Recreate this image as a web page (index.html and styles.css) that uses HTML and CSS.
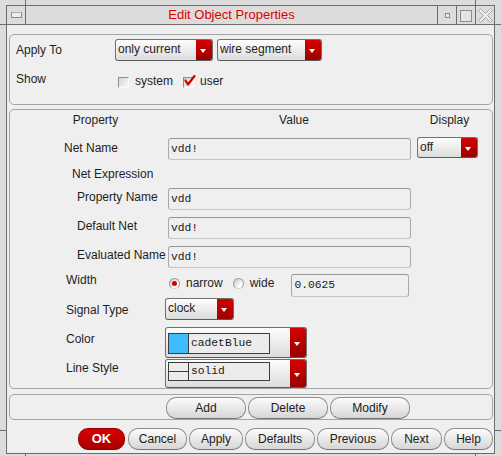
FILE: index.html
```html
<!DOCTYPE html>
<html>
<head>
<meta charset="utf-8">
<title>Edit Object Properties</title>
<link rel="stylesheet" href="styles.css">
</head>
<body>
<div class="screen">
  <div class="mark m-tl"></div>
  <div class="mark m-tr"></div>
  <div class="mark m-lh1"></div>
  <div class="mark m-rh1"></div>
  <div class="mark m-lh2"></div>
  <div class="mark m-rh2"></div>
  <div class="mark m-bl"></div>
  <div class="mark m-br"></div>

  <div class="frame">
    <div class="titlebar">
      <div class="tb-cell"><span class="ico-menu"></span></div>
      <div class="tb-title">Edit Object Properties</div>
      <div class="tb-cell"><span class="ico-min"></span></div>
      <div class="tb-cell sep"><span class="ico-max"></span></div>
      <div class="tb-cell sep">
        <svg class="ico-close" width="15" height="15" viewBox="-0.5 -0.5 15 15">
          <polygon points="0,2 2,0 7,5 12,0 14,2 9,7 14,12 12,14 7,9 2,14 0,12 5,7" fill="#ececec" stroke="#a4a4a4" stroke-width="1"/>
        </svg>
      </div>
    </div>

    <div class="dialog">
      <div class="group g1">
        <div class="g1-row r-apply">
          <div class="g1-lbl">Apply To</div>
          <div class="combo c-only"><span class="combo-text">only current</span><span class="combo-btn"></span></div>
          <div class="combo c-wire"><span class="combo-text">wire segment</span><span class="combo-btn"></span></div>
        </div>
        <div class="g1-row r-show">
          <div class="g1-lbl">Show</div>
          <span class="check"></span><span class="chk-lbl">system</span>
          <span class="check on">
            <svg width="13" height="13" viewBox="0 0 13 13"><path d="M2.5 5.5 L5 9.5 L11.5 1" fill="none" stroke="#d40000" stroke-width="2.2" stroke-linecap="round" stroke-linejoin="round"/></svg>
          </span><span class="chk-lbl">user</span>
        </div>
      </div>

      <div class="group g2">
        <div class="row hdr">
          <span class="h1">Property</span>
          <span class="h2">Value</span>
          <span class="h3">Display</span>
        </div>
        <div class="row r-net">
          <div class="lbl">Net Name</div>
          <div class="field f-net">vdd!</div>
          <div class="combo c-disp"><span class="combo-text">off</span><span class="combo-btn"></span></div>
        </div>
        <div class="row r-expr">
          <div class="lbl">Net Expression</div>
        </div>
        <div class="row r-sub r-prop">
          <div class="lbl">Property Name</div>
          <div class="field f-wide">vdd</div>
        </div>
        <div class="row r-sub r-def">
          <div class="lbl">Default Net</div>
          <div class="field f-wide">vdd!</div>
        </div>
        <div class="row r-sub r-eval">
          <div class="lbl">Evaluated Name</div>
          <div class="field f-wide">vdd!</div>
        </div>
        <div class="row r-width">
          <div class="lbl">Width</div>
          <div class="radios">
            <span class="radio on"></span><span class="rad-lbl">narrow</span>
            <span class="radio r2"></span><span class="rad-lbl">wide</span>
          </div>
          <div class="field f-num">0.0625</div>
        </div>
        <div class="row r-sig">
          <div class="lbl">Signal Type</div>
          <div class="combo c-clock"><span class="combo-text">clock</span><span class="combo-btn"></span></div>
        </div>
        <div class="row r-color">
          <div class="lbl">Color</div>
          <div class="combo big c-color">
            <div class="cbox">
              <span class="swatch"></span>
              <span class="cbox-text">cadetBlue</span>
            </div>
            <span class="spacer"></span>
            <span class="combo-btn"></span>
          </div>
        </div>
        <div class="row r-line">
          <div class="lbl">Line Style</div>
          <div class="combo big c-line">
            <div class="cbox">
              <span class="linesample"></span>
              <span class="cbox-text">solid</span>
            </div>
            <span class="spacer"></span>
            <span class="combo-btn"></span>
          </div>
        </div>
      </div>

      <div class="group g3">
        <div class="btn b80">Add</div>
        <div class="btn b80">Delete</div>
        <div class="btn b80">Modify</div>
      </div>

      <div class="actions">
        <div class="btn ok">OK</div>
        <div class="btn b-cancel">Cancel</div>
        <div class="btn b-apply">Apply</div>
        <div class="btn b-def">Defaults</div>
        <div class="btn b-prev">Previous</div>
        <div class="btn b-next">Next</div>
        <div class="btn b-help">Help</div>
      </div>
    </div>
  </div>
</div>
</body>
</html>
```

FILE: styles.css
```css
* { box-sizing: border-box; }
html, body { margin: 0; padding: 0; }
body {
  background: #dcdcdc;
  font-family: "Liberation Sans", Arial, sans-serif;
  font-size: 12px;
  color: #1e1e1e;
}

.screen {
  position: relative;
  width: 501px;
  height: 456px;
  padding: 5px 0 0 6px;
  overflow: hidden;
  background: #dcdcdc;
}

/* window-manager resize marks */
.mark { position: absolute; background: #6c6c6c; }
.m-tl { left: 25px; top: 0; width: 1px; height: 5px; }
.m-tr { left: 475px; top: 0; width: 1px; height: 5px; }
.m-lh1 { left: 0; top: 24px; width: 6px; height: 1px; }
.m-rh1 { left: 495px; top: 24px; width: 6px; height: 1px; }
.m-lh2 { left: 0; top: 430px; width: 6px; height: 1px; }
.m-rh2 { left: 495px; top: 430px; width: 6px; height: 1px; }
.m-bl { left: 25px; top: 454px; width: 1px; height: 2px; }
.m-br { left: 475px; top: 454px; width: 1px; height: 2px; }

.frame {
  width: 489px;
  height: 449px;
  border: 1px solid #6c6c6c;
  display: flex;
  flex-direction: column;
}

/* title bar */
.titlebar {
  flex: none;
  height: 19px;
  display: flex;
  border-bottom: 1px solid #6c6c6c;
  background: #dcdcdc;
}
.tb-cell {
  flex: none;
  width: 18px;
  display: flex;
  align-items: center;
  justify-content: center;
}
.tb-cell.sep { width: 19px; border-left: 1px solid #6c6c6c; }
.tb-title {
  flex: none;
  width: 413px;
  border-left: 1px solid #6c6c6c;
  border-right: 1px solid #6c6c6c;
  text-align: center;
  line-height: 18px;
  font-size: 13px;
  color: #dd0000;
}
.ico-menu {
  display: block;
  width: 11px;
  height: 6px;
  border: 1px solid #8a8a8a;
  border-top-color: #b0b0b0;
  background: #ececec;
  margin-left: 1px;
}
.ico-min {
  display: block;
  width: 5px;
  height: 5px;
  border: 1px solid #8a8a8a;
  background: #ececec;
  margin-top: 1px;
}
.ico-max {
  display: block;
  width: 12px;
  height: 12px;
  border: 1px solid #8a8a8a;
  background: #e4e4e4;
  margin-top: 1px;
}
.ico-close { display: block; }

/* dialog body */
.dialog {
  flex: 1;
  background: #efefef;
  padding: 9px 1px 0 2px;
  display: flex;
  flex-direction: column;
}
.group {
  flex: none;
  border: 1px solid #a4a4a4;
  border-radius: 5px;
}
.g1 { height: 71px; padding-top: 4px; }
.g2 { height: 280px; margin-top: 4px; display: flex; flex-direction: column; }
.g3 { height: 26px; margin-top: 5px; padding: 2px 0 0 156px; display: flex; gap: 2px; }

/* group 1 */
.g1-row { display: flex; align-items: flex-start; }
.r-apply { height: 22px; }
.r-show { height: 20px; margin-top: 10px; }
.g1-lbl {
  flex: none;
  width: 105px;
  padding-left: 6px;
  line-height: 15px;
}
.r-apply .g1-lbl { padding-top: 4px; }
.r-show .g1-lbl { padding-top: 1px; }

.check {
  flex: none;
  position: relative;
  width: 11px;
  height: 11px;
  margin: 6px 0 0 3px;
  border: 1px solid;
  border-color: #8e8e8e #f8f8f8 #f8f8f8 #8e8e8e;
  background: linear-gradient(135deg, #d4d4d4, #fafafa);
}
.check.on { margin-left: 10px; }
.check svg { position: absolute; left: -1px; top: -3px; }
.chk-lbl { line-height: 15px; padding-top: 3px; margin-left: 6px; }

/* combos */
.combo {
  flex: none;
  display: flex;
  height: 22px;
  border: 1px solid #707070;
  border-bottom-color: #5a5a5a;
  border-radius: 3px;
  background: linear-gradient(#fdfdfd, #dcdcdc);
  overflow: hidden;
}
.combo-text {
  flex: 1;
  padding-left: 2px;
  line-height: 19px;
  white-space: nowrap;
  overflow: hidden;
}
.combo-btn {
  flex: none;
  position: relative;
  width: 16px;
  background: linear-gradient(#d60000, #9a0000);
}
.combo-btn::after {
  content: "";
  position: absolute;
  left: 4px;
  top: 50%;
  margin-top: -1px;
  border-left: 3.5px solid transparent;
  border-right: 3.5px solid transparent;
  border-top: 4px solid #ffffff;
}
.c-only { width: 98px; }
.c-wire { width: 105px; margin-left: 4px; }
.c-disp { width: 61px; height: 21px; margin-left: 6px; }
.c-clock { width: 69px; }

.combo.big { width: 142px; align-items: flex-start; }
.combo.big .combo-btn { align-self: stretch; }
.c-color { height: 31px; }
.c-line { height: 29px; margin-top: 1px; }
.spacer { flex: 1; }
.cbox {
  flex: none;
  display: flex;
  width: 102px;
  margin-left: 2px;
  border: 1px solid #3c3c3c;
  background: #ececec;
}
.c-color .cbox { height: 21px; margin-top: 5px; }
.c-line .cbox { height: 19px; margin-top: 2px; }
.swatch {
  flex: none;
  width: 20px;
  border-right: 1px solid #3c3c3c;
  background: #3dbdff;
}
.linesample {
  flex: none;
  width: 20px;
  border-right: 1px solid #3c3c3c;
  background: linear-gradient(transparent 8px, #3c3c3c 8px, #3c3c3c 9px, transparent 9px);
}
.cbox-text {
  padding-left: 2px;
  font-family: "Liberation Mono", "Courier New", monospace;
  font-size: 11.3px;
  line-height: 18px;
  color: #1a1a1a;
}
.c-line .cbox-text { line-height: 17px; }

/* group 2 rows */
.row { flex: none; display: flex; align-items: flex-start; }
.lbl {
  flex: none;
  width: 158px;
  line-height: 15px;
  white-space: nowrap;
  overflow: hidden;
}
.hdr { height: 27px; padding-top: 3px; line-height: 15px; }
.hdr span { text-align: center; }
.h1 { width: 171px; }
.h2 { width: 226px; }
.h3 { width: 85px; }

.r-net { height: 23px; }
.r-net .lbl { padding: 4px 0 0 54px; }
.r-expr { height: 27px; }
.r-expr .lbl { width: auto; padding: 7px 0 0 62px; }
.r-prop, .r-def { height: 29px; }
.r-eval { height: 28px; }
.r-sub .lbl { padding: 3px 0 0 67px; }
.r-width { height: 25px; }
.r-width .lbl { padding-left: 56px; }
.r-sig { height: 29px; }
.r-color { height: 31px; }
.r-line { height: 30px; }
.r-sig .lbl, .r-color .lbl, .r-line .lbl { width: 155px; padding-left: 56px; }
.r-sig .lbl, .r-color .lbl { padding-top: 5px; }
.r-line .lbl { padding-top: 3px; }

.field {
  flex: none;
  height: 22px;
  margin-top: 1px;
  padding-left: 2px;
  border: 1px solid #a8a8a8;
  border-top-color: #959595;
  border-bottom-color: #c4c4c4;
  border-radius: 3px;
  background: #efefef;
  font-family: "Liberation Mono", "Courier New", monospace;
  font-size: 11.3px;
  line-height: 20px;
  color: #1a1a1a;
}
.f-net, .f-wide { width: 243px; }
.f-num { width: 118px; height: 23px; line-height: 21px; margin-left: 17px; }

.radios {
  flex: none;
  display: flex;
  align-items: center;
  height: 17px;
  margin: 2px 0 0 1px;
}
.radio {
  flex: none;
  position: relative;
  width: 11px;
  height: 11px;
  border-radius: 50%;
  border: 1px solid #9c9c9c;
  border-bottom-color: #d0d0d0;
  background: linear-gradient(135deg, #c4c4c4, #ffffff 70%);
}
.radio.on::after {
  content: "";
  position: absolute;
  left: 2px;
  top: 2px;
  width: 5px;
  height: 5px;
  border-radius: 50%;
  background: #d00000;
}
.radio.r2 { margin-left: 10px; }
.rad-lbl { margin-left: 6px; line-height: 15px; }

/* buttons */
.btn {
  flex: none;
  height: 22px;
  border: 1px solid #8e8e8e;
  border-bottom-color: #777;
  border-radius: 10px;
  background: linear-gradient(#fcfcfc, #d6d6d6);
  text-align: center;
  line-height: 20px;
  color: #202020;
}
.b80 { width: 80px; }
.actions {
  flex: none;
  height: 22px;
  margin-top: 8px;
  display: flex;
  justify-content: flex-end;
  gap: 2px;
}
.btn.ok {
  width: 47px;
  border-color: #8a0000;
  background: linear-gradient(#dc0000, #a80000);
  color: #ffffff;
  font-weight: bold;
  font-size: 13px;
}
.b-cancel { width: 59px; margin-left: 1px; }
.b-apply { width: 54px; }
.b-def { width: 70px; }
.b-prev { width: 72px; }
.b-next { width: 51px; }
.b-help { width: 49px; }
```
